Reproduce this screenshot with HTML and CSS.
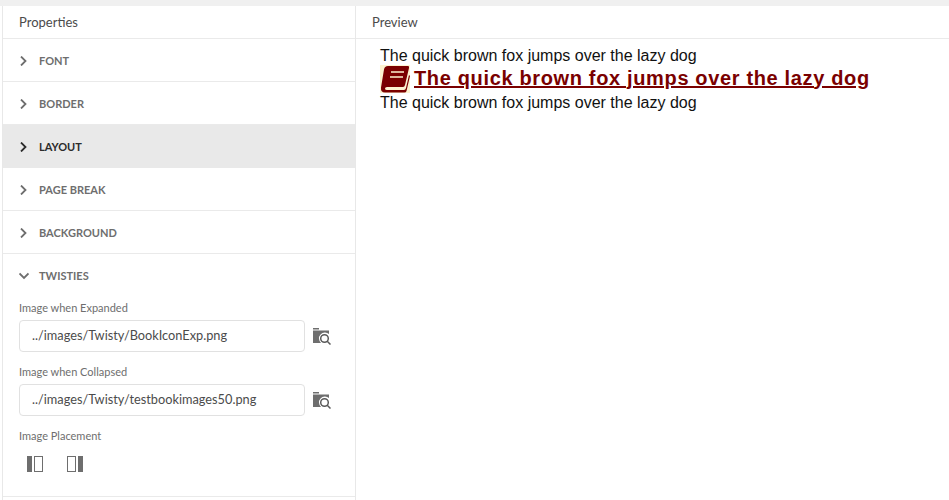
FILE: index.html
```html
<!DOCTYPE html>
<html lang="en">
<head>
    <meta charset="UTF-8">
    <meta name="viewport" content="width=device-width, initial-scale=1.0">
    <title>Twisty Properties</title>
    <link rel="stylesheet" href="styles.css">
</head>
<body>
    <div class="workspace">
        <div class="properties">
            <div class="panelTitle">Properties</div>
            <div class="group">
                <svg class="chevron" viewBox="0 0 10 10"><path d="M2 .5l4.500 4.500-4.500 4.500"/></svg>
                <span>FONT</span>
            </div>
            <div class="group">
                <svg class="chevron" viewBox="0 0 10 10"><path d="M2 .5l4.500 4.500-4.500 4.500"/></svg>
                <span>BORDER</span>
            </div>
            <div class="group selected">
                <svg class="chevron" viewBox="0 0 10 10"><path d="M2 .5l4.500 4.500-4.500 4.500"/></svg>
                <span>LAYOUT</span>
            </div>
            <div class="group">
                <svg class="chevron" viewBox="0 0 10 10"><path d="M2 .5l4.500 4.500-4.500 4.500"/></svg>
                <span>PAGE BREAK</span>
            </div>
            <div class="group">
                <svg class="chevron" viewBox="0 0 10 10"><path d="M2 .5l4.500 4.500-4.500 4.500"/></svg>
                <span>BACKGROUND</span>
            </div>
            <div class="twisties">
                <div class="twistiesHead">
                    <svg class="chevron" viewBox="0 0 10 10"><path d="M.5 2.500l4.500 4.500 4.500-4.500"/></svg>
                    <span>TWISTIES</span>
                </div>
                <div class="fieldLabel">Image when Expanded</div>
                <div class="field">
                    <div class="textBox">../images/Twisty/BookIconExp.png</div>
                    <svg class="browse" viewBox="0 0 18 18">
                        <path class="folder" d="M0 0h6v1.500h-6zM0 2.500h16v3.500a5.500 5.500 0 0 0-8 9h-8z"/>
                        <circle class="lens" cx="11.500" cy="10.500" r="3.800"/>
                        <path class="lens" d="M14.200 13.200l3.300 3.300"/>
                    </svg>
                </div>
                <div class="fieldLabel">Image when Collapsed</div>
                <div class="field">
                    <div class="textBox">../images/Twisty/testbookimages50.png</div>
                    <svg class="browse" viewBox="0 0 18 18">
                        <path class="folder" d="M0 0h6v1.500h-6zM0 2.500h16v3.500a5.500 5.500 0 0 0-8 9h-8z"/>
                        <circle class="lens" cx="11.500" cy="10.500" r="3.800"/>
                        <path class="lens" d="M14.200 13.200l3.300 3.300"/>
                    </svg>
                </div>
                <div class="fieldLabel">Image Placement</div>
                <div class="placement">
                    <svg class="placeIcon" viewBox="0 0 17 16">
                        <rect class="solid" x="0" y="0" width="5" height="16"/>
                        <rect class="hollow" x="7.500" y="0.500" width="8" height="15"/>
                    </svg>
                    <svg class="placeIcon" viewBox="0 0 17 16">
                        <rect class="hollow" x="0.500" y="0.500" width="8" height="15"/>
                        <rect class="solid" x="11" y="0" width="5" height="16"/>
                    </svg>
                </div>
            </div>
        </div>
        <div class="preview">
            <div class="panelTitle">Preview</div>
            <div class="previewBody">
                <div class="sampleLine">The quick brown fox jumps over the lazy dog</div>
                <div class="twistyLine">
                    <svg class="bookIcon" viewBox="0 0 30 28">
                        <rect class="bookBack" width="30" height="28"/>
                        <path class="bookCover" d="M8 1h20q1.500 0 1 2l-4 17q-.5 2-2 2H7q-2 0-2 1.500T7 25h17q1.500 0 2-2l3-13 1 1-3.500 15q-.5 1.500-2 1.500H5q-4.500 0-4-5l3-18q.5-3.500 4-3.500z"/>
                        <path class="bookLine" d="M11 7h13M10 12h13"/>
                    </svg>
                    <a class="twistyLink">The quick brown fox jumps over the lazy dog</a>
                </div>
                <div class="sampleLine lastLine">The quick brown fox jumps over the lazy dog</div>
            </div>
        </div>
    </div>
</body>
</html>
```

FILE: styles.css
```css
html, body {
    margin: 0;
    height: 100%;
    background-color: #fff;
    overflow: hidden;
}
body {
    font-family: Lato, sans-serif;
    color: #4b4b4b;
}
.workspace {
    display: flex;
    height: 500px;
    box-sizing: border-box;
    border-top: 6px solid #f0f0f0;
    background-color: #fff;
}
.properties {
    width: 352px;
    margin-left: 2px;
    border-left: 1px solid #e8e8e8;
    border-right: 1px solid #e8e8e8;
    flex-shrink: 0;
}
.preview {
    flex: 1;
}
.panelTitle {
    height: 31px;
    line-height: 31px;
    padding-top: 1px;
    padding-left: 16px;
    font-size: 13px;
    border-bottom: 1px solid #eaeaea;
}
.group, .twistiesHead {
    display: flex;
    align-items: center;
    font-size: 11px;
    font-weight: 700;
    color: #6e6e6e;
}
.group {
    height: 41px;
    padding-top: 1px;
    padding-left: 16px;
    border-bottom: 1px solid #eaeaea;
}
.group.selected {
    height: 43px;
    padding-top: 0;
    border-bottom: 0;
    background-color: #e9e9e9;
    color: #2c2c2c;
}
.chevron {
    width: 10px;
    height: 10px;
    margin-right: 10px;
    fill: none;
    stroke: currentColor;
    stroke-width: 1.800;
}
.twisties {
    padding: 0 16px;
    height: 243px;
    box-sizing: border-box;
    border-bottom: 1px solid #eaeaea;
}
.twistiesHead {
    height: 43px;
    margin-bottom: 4px;
}
.fieldLabel {
    font-size: 11px;
    line-height: 14px;
    color: #6e6e6e;
}
.field {
    display: flex;
    align-items: center;
    margin-top: 5px;
    margin-bottom: 13px;
}
.textBox {
    width: 286px;
    height: 32px;
    line-height: 28px;
    box-sizing: border-box;
    padding-left: 12px;
    border: 1px solid #e1e1e1;
    border-radius: 4px;
    font-size: 12.750px;
    color: #4b4b4b;
}
.browse {
    width: 18px;
    height: 18px;
    margin-left: 8px;
    margin-top: 1px;
}
.folder {
    fill: #6e6e6e;
}
.lens {
    fill: none;
    stroke: #5a5a5a;
    stroke-width: 1.500;
}
.placement {
    display: flex;
    gap: 23px;
    margin-top: 13px;
    padding-left: 8px;
}
.placeIcon {
    width: 17px;
    height: 16px;
}
.solid {
    fill: #6e6e6e;
}
.hollow {
    fill: none;
    stroke: #6e6e6e;
}
.previewBody {
    padding: 8px 0 0 24px;
    font-family: "Liberation Sans", Arial, sans-serif;
}
.sampleLine {
    font-size: 16px;
    line-height: 18px;
    color: #111;
}
.lastLine {
    margin-top: 1px;
}
.twistyLine {
    display: flex;
    align-items: center;
    height: 28px;
}
.bookIcon {
    width: 30px;
    height: 28px;
    margin-right: 4px;
}
.bookBack {
    fill: #fdf3d0;
}
.bookCover {
    fill: #7a0000;
}
.bookLine {
    fill: none;
    stroke: #fdf3d0;
    stroke-width: 1.500;
}
.twistyLink {
    font-size: 20px;
    font-weight: 700;
    color: #7a0000;
    letter-spacing: .65px;
    text-decoration: underline;
    padding-bottom: 2px;
}
```
